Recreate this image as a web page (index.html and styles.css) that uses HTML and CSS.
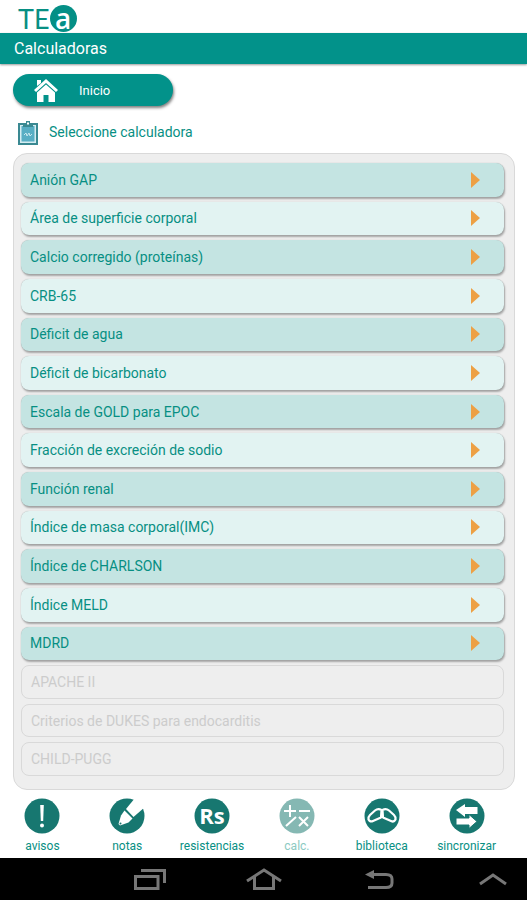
FILE: index.html
```html
<!DOCTYPE html>
<html lang="es">

<head>
    <meta charset="UTF-8" />
    <meta name="viewport" content="width=device-width, initial-scale=1.0" />
    <title>Calculadoras</title>
    <link rel="stylesheet" href="styles.css">
</head>

<body>
    <header>
        <div class="logo">TE<span class="logo-circle">a</span></div>
        <h1 class="title-bar">Calculadoras</h1>
    </header>

    <main>
        <a class="home-btn" href="#">
            <svg width="26" height="24" viewBox="0 0 26 24" fill="#fff">
                <path d="M1 12 L13 1 L25 12 L23 14 L13 5 L3 14 Z" />
                <path d="M4 2 H8 V5 L4 8 Z" />
                <path d="M4 14.500 L13 6.500 L22 14.500 V24 H15.500 V17 H10.500 V24 H4 Z" />
            </svg>
            <span>Inicio</span>
        </a>

        <h2 class="subtitle">
            <svg width="20" height="24" viewBox="0 0 20 24">
                <rect x="1" y="3" width="18" height="20" fill="#d5edf2" stroke="#3a8992" stroke-width="2" />
                <rect x="3.500" y="5" width="13" height="15.500" fill="#58aec4" />
                <path d="M5 6 V3 H8 V0 H12 V3 H15 V6 Z" fill="#3a8992" />
                <rect x="9" y="1.500" width="2" height="2" fill="#fff" />
                <path d="M6 14 L8 12 L9 15 L11 12 L12 15 L14 13" fill="none" stroke="#c9e8ef" />
            </svg>
            Seleccione calculadora
        </h2>

        <ul class="calc-list">
            <li><a href="#">Anión GAP</a></li>
            <li><a href="#">Área de superficie corporal</a></li>
            <li><a href="#">Calcio corregido (proteínas)</a></li>
            <li><a href="#">CRB-65</a></li>
            <li><a href="#">Déficit de agua</a></li>
            <li><a href="#">Déficit de bicarbonato</a></li>
            <li><a href="#">Escala de GOLD para EPOC</a></li>
            <li><a href="#">Fracción de excreción de sodio</a></li>
            <li><a href="#">Función renal</a></li>
            <li><a href="#">Índice de masa corporal(IMC)</a></li>
            <li><a href="#">Índice de CHARLSON</a></li>
            <li><a href="#">Índice MELD</a></li>
            <li><a href="#">MDRD</a></li>
            <li class="disabled"><span>APACHE II</span></li>
            <li class="disabled"><span>Criterios de DUKES para endocarditis</span></li>
            <li class="disabled"><span>CHILD-PUGG</span></li>
        </ul>
    </main>

    <nav class="tabs">
        <a href="#">
            <svg width="36" height="36" viewBox="0 0 36 36">
                <circle cx="18" cy="18" r="17.500" fill="#177770" />
                <path d="M16.200 7 H19.800 L19.200 23 H16.800 Z" fill="#fff" />
                <circle cx="18" cy="27.500" r="2" fill="#fff" />
            </svg>
            avisos
        </a>
        <a href="#">
            <svg width="36" height="36" viewBox="0 0 36 36">
                <circle cx="18" cy="18" r="17.500" fill="#177770" />
                <path d="M26 0 H36 V9 L24.500 19 L17 11 Z" fill="#fff" />
                <path d="M15.500 12.500 L23.500 20.500 L19.500 24.500 L11 27.500 L9.500 26 L12 17.500 Z" fill="#fff" />
                <circle cx="11.500" cy="25.500" r="1" fill="#177770" />
            </svg>
            notas
        </a>
        <a href="#">
            <svg width="36" height="36" viewBox="0 0 36 36">
                <circle cx="18" cy="18" r="17.500" fill="#177770" />
                <text class="rs" x="18" y="26" text-anchor="middle">Rs</text>
            </svg>
            resistencias
        </a>
        <a href="#" class="current">
            <svg width="36" height="36" viewBox="0 0 36 36">
                <circle cx="18" cy="18" r="17.500" fill="#85b8b3" />
                <path d="M5 13 H17 M11 7 V19 M20 13 H31 M7 28 L17 19 M20 19 L29 28 M29 19 L20 28" stroke="#fff" stroke-width="2" />
            </svg>
            calc.
        </a>
        <a href="#">
            <svg width="36" height="36" viewBox="0 0 36 36">
                <circle cx="18" cy="18" r="17.500" fill="#177770" />
                <g fill="none" stroke="#fff" stroke-width="2.200" stroke-linejoin="round">
                    <path d="M17.500 12 Q14 10 11 12.500 L6 17 Q4 19 4.500 21.500 Q6 24.500 9 23 L17 19.500 Z" />
                    <path d="M18.500 12 Q22 10 25 12.500 L30 17 Q32 19 31.500 21.500 Q30 24.500 27 23 L19 19.500 Z" />
                </g>
            </svg>
            biblioteca
        </a>
        <a href="#">
            <svg width="36" height="36" viewBox="0 0 36 36">
                <circle cx="18" cy="18" r="17.500" fill="#177770" />
                <path d="M7 12 L16 6 V9 H28.500 V16 H16 V19 Z" fill="#fff" />
                <path d="M28 23.500 L20 16.500 V20 H7 V27 H20 V30.500 Z" fill="#fff" stroke="#177770" />
            </svg>
            sincronizar
        </a>
    </nav>

    <footer class="system-bar">
        <button aria-label="Recientes">
            <svg width="36" height="24" viewBox="0 0 36 24">
                <path d="M3.500 9.500 H26 V21.500 H3.500 Z M9 3.500 H32.500 V16" />
            </svg>
        </button>
        <button aria-label="Inicio">
            <svg width="36" height="24" viewBox="0 0 36 24">
                <path d="M1 14 L18 3 L35 14 M8.500 10 V21.500 H27.500 V10" />
            </svg>
        </button>
        <button aria-label="Atrás">
            <svg width="36" height="24" viewBox="0 0 36 24">
                <path d="M10 7.500 H25 Q31 7.500 31 12 V16 Q31 20.500 25 20.500 H7" />
                <path class="arrow-head" d="M4 7.500 L13 3 V12 Z" />
            </svg>
        </button>
        <button aria-label="Mostrar">
            <svg width="36" height="24" viewBox="0 0 36 24">
                <path d="M5 17 L18 8 L31 17" />
            </svg>
        </button>
    </footer>
</body>

</html>
```

FILE: styles.css
```css
* {
    box-sizing: border-box;
}

body {
    margin: 0;
    min-height: 100vh;
    display: flex;
    flex-direction: column;
    background: #fff;
    color: #078f83;
    font-family: Roboto, sans-serif;
    font-size: 14px;
}

a {
    color: inherit;
    text-decoration: none;
}

/* header */
.logo {
    display: flex;
    align-items: center;
    height: 33px;
    padding: 4px 18px 0;
    font-family: Lato, sans-serif;
    font-size: 27px;
}

.logo-circle {
    width: 27px;
    height: 27px;
    border-radius: 50%;
    background: #048f86;
    color: #fff;
    font-family: "Open Sans", sans-serif;
    font-size: 28px;
    font-weight: 600;
    line-height: 27px;
    text-align: center;
}

.title-bar {
    margin: 0;
    padding: 0 14px;
    background: #02928a;
    color: #fff;
    font-size: 16px;
    font-weight: 400;
    line-height: 31px;
    box-shadow: 0 1px 2px rgba(0, 0, 0, 0.4);
}

/* content */
main {
    flex: 1;
    display: flex;
    flex-direction: column;
    padding: 10px 12px 0 13px;
}

.home-btn {
    display: flex;
    align-items: center;
    gap: 20px;
    width: 160px;
    height: 32px;
    padding-left: 20px;
    border-radius: 16px;
    background: #02928a;
    color: #fff;
    font-size: 13px;
    box-shadow: 1px 2px 3px rgba(0, 0, 0, 0.5);
}

.subtitle {
    display: flex;
    align-items: center;
    gap: 11px;
    margin: 14px 0 8px;
    padding-left: 5px;
    font-size: 14px;
    font-weight: 400;
    line-height: 25px;
}

.calc-list {
    flex: 1;
    display: grid;
    grid-auto-rows: 1fr;
    gap: 5px;
    margin: 0;
    padding: 9px 10px 13px 7px;
    list-style: none;
    background: #eee;
    border: 1px solid #d9d9d9;
    border-radius: 14px;
}

.calc-list li {
    display: flex;
    border-radius: 8px;
    background: #e2f3f2;
    box-shadow: 1px 2px 2px rgba(0, 0, 0, 0.3), 0 0 1px rgba(0, 0, 0, 0.3);
}

.calc-list li:nth-child(odd) {
    background: #c4e4e2;
}

.calc-list a,
.calc-list span {
    flex: 1;
    display: flex;
    align-items: center;
    justify-content: space-between;
    padding: 0 24px 0 9px;
}

.calc-list a::after {
    content: "";
    border: 8px solid transparent;
    border-left: 9px solid #eda044;
    border-right: 0;
}

.calc-list li.disabled,
.calc-list li.disabled:nth-child(odd) {
    background: none;
    border: 1px solid #d9d9d9;
    box-shadow: none;
    color: #ccc;
}

/* bottom tabs */
.tabs {
    display: grid;
    grid-template-columns: repeat(6, 1fr);
    padding: 8px 18px 4px 0;
}

.tabs a {
    display: flex;
    flex-direction: column;
    align-items: center;
    gap: 4px;
    font-size: 12px;
    line-height: 16px;
}

.tabs .current {
    color: #8ccac2;
}

.rs {
    fill: #fff;
    font-family: "Open Sans", sans-serif;
    font-size: 22px;
    font-weight: 700;
}

/* android bar */
.system-bar {
    display: flex;
    justify-content: space-between;
    align-items: center;
    height: 42px;
    padding: 0 16px 0 25%;
    background: #000;
}

.system-bar button {
    display: flex;
    padding: 0;
    border: 0;
    background: none;
}

.system-bar svg {
    fill: none;
    stroke: #777;
    stroke-width: 3;
}

.system-bar .arrow-head {
    fill: #777;
    stroke: none;
}
```
